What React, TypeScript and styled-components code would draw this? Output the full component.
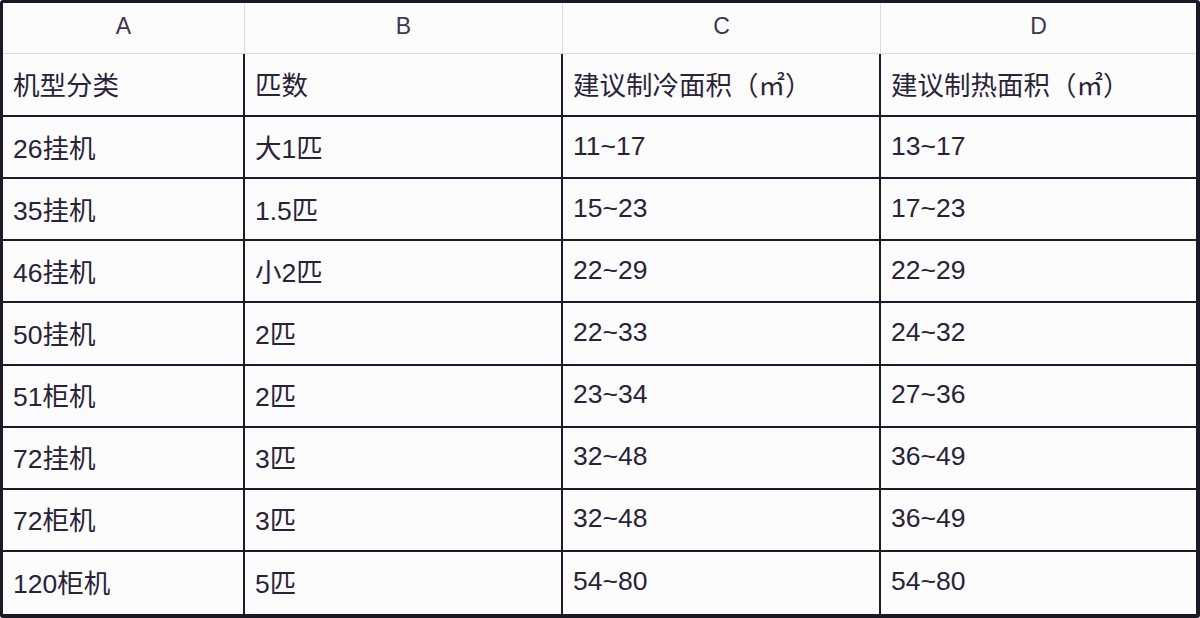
import React from 'react';
import styled, { createGlobalStyle } from 'styled-components';

interface SpecRow {
  model: string;
  power: string;
  cooling: string;
  heating: string;
}

const GlobalStyle = createGlobalStyle`
  html, body {
    margin: 0;
    padding: 0;
    background: #ffffff;
  }
  * {
    box-sizing: border-box;
  }
`;

const Sheet = styled.div`
  width: 1200px;
  height: 618px;
  border: 3px solid #1c1828;
  border-bottom-width: 4px;
  border-right-width: 4px;
  border-radius: 3px;
  background: #fcfcfd;
  display: grid;
  grid-template-columns: 242px 318px 318px 1fr;
  grid-template-rows: 51px 63px repeat(8, 1fr);
  font-family: "Liberation Sans", "Noto Sans CJK SC", sans-serif;
  overflow: hidden;
`;

const ColumnHead = styled.div<{ $last?: boolean }>`
  display: flex;
  align-items: center;
  justify-content: center;
  padding-bottom: 3px;
  font-size: 23px;
  color: #3d3650;
  border-bottom: 1px solid #d9d9de;
  border-right: ${p => (p.$last ? 'none' : '1px solid #dcdce1')};
`;

const Cell = styled.div<{ $last?: boolean; $bottom?: boolean }>`
  display: flex;
  align-items: center;
  padding: 0 0 2px 10px;
  font-size: 26.5px;
  color: #2a2237;
  white-space: nowrap;
  border-right: ${p => (p.$last ? 'none' : '2px solid #1e1a2b')};
  border-bottom: ${p => (p.$bottom ? 'none' : '2px solid #1e1a2b')};
`;

const letters = ['A', 'B', 'C', 'D'];

const headings = ['机型分类', '匹数', '建议制冷面积（㎡）', '建议制热面积（㎡）'];

const rows: SpecRow[] = [
  { model: '26挂机', power: '大1匹', cooling: '11~17', heating: '13~17' },
  { model: '35挂机', power: '1.5匹', cooling: '15~23', heating: '17~23' },
  { model: '46挂机', power: '小2匹', cooling: '22~29', heating: '22~29' },
  { model: '50挂机', power: '2匹', cooling: '22~33', heating: '24~32' },
  { model: '51柜机', power: '2匹', cooling: '23~34', heating: '27~36' },
  { model: '72挂机', power: '3匹', cooling: '32~48', heating: '36~49' },
  { model: '72柜机', power: '3匹', cooling: '32~48', heating: '36~49' },
  { model: '120柜机', power: '5匹', cooling: '54~80', heating: '54~80' },
];

export default function App() {
  return (
    <>
      <GlobalStyle />
      <Sheet>
        {letters.map((l, i) => (
          <ColumnHead key={l} $last={i === 3}>
            {l}
          </ColumnHead>
        ))}

        {headings.map((h, i) => (
          <Cell key={h} $last={i === 3}>
            {h}
          </Cell>
        ))}

        {rows.map((row, r) => {
          const bottom = r === rows.length - 1;
          return (
            <React.Fragment key={`${row.model}-${r}`}>
              <Cell $bottom={bottom}>{row.model}</Cell>
              <Cell $bottom={bottom}>{row.power}</Cell>
              <Cell $bottom={bottom}>{row.cooling}</Cell>
              <Cell $bottom={bottom} $last>
                {row.heating}
              </Cell>
            </React.Fragment>
          );
        })}
      </Sheet>
    </>
  );
}
